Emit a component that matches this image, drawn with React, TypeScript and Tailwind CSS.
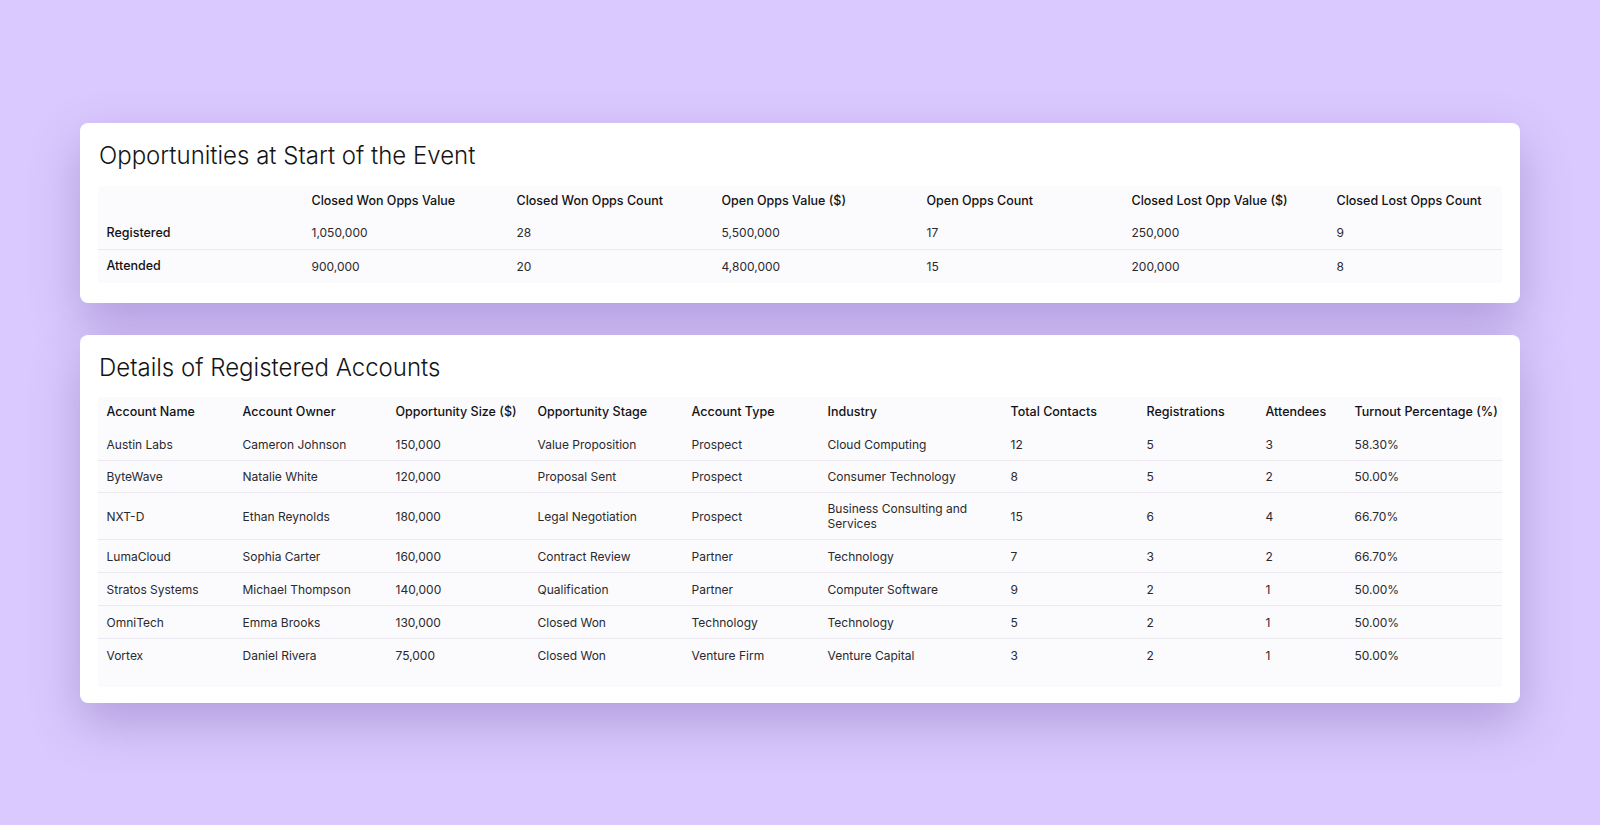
const OPP_COLS = [
  "",
  "Closed Won Opps Value",
  "Closed Won Opps Count",
  "Open Opps Value ($)",
  "Open Opps Count",
  "Closed Lost Opp Value ($)",
  "Closed Lost Opps Count",
];

const OPP_ROWS = [
  ["Registered", "1,050,000", "28", "5,500,000", "17", "250,000", "9"],
  ["Attended", "900,000", "20", "4,800,000", "15", "200,000", "8"],
];

const ACC_COLS = [
  "Account Name",
  "Account Owner",
  "Opportunity Size ($)",
  "Opportunity Stage",
  "Account Type",
  "Industry",
  "Total Contacts",
  "Registrations",
  "Attendees",
  "Turnout Percentage (%)",
];

const ACC_ROWS = [
  ["Austin Labs", "Cameron Johnson", "150,000", "Value Proposition", "Prospect", "Cloud Computing", "12", "5", "3", "58.30%"],
  ["ByteWave", "Natalie White", "120,000", "Proposal Sent", "Prospect", "Consumer Technology", "8", "5", "2", "50.00%"],
  ["NXT-D", "Ethan Reynolds", "180,000", "Legal Negotiation", "Prospect", "Business Consulting and Services", "15", "6", "4", "66.70%"],
  ["LumaCloud", "Sophia Carter", "160,000", "Contract Review", "Partner", "Technology", "7", "3", "2", "66.70%"],
  ["Stratos Systems", "Michael Thompson", "140,000", "Qualification", "Partner", "Computer Software", "9", "2", "1", "50.00%"],
  ["OmniTech", "Emma Brooks", "130,000", "Closed Won", "Technology", "Technology", "5", "2", "1", "50.00%"],
  ["Vortex", "Daniel Rivera", "75,000", "Closed Won", "Venture Firm", "Venture Capital", "3", "2", "1", "50.00%"],
];

// row heights measured off the screenshot
const ACC_HEIGHTS = ["h-[33px]", "h-[32px]", "h-[47px]", "h-[33px]", "h-[33px]", "h-[33px]", "h-[33px]"];

const oppGrid = "grid grid-cols-[205px_205px_205px_205px_205px_205px_1fr]";
const accGrid = "grid grid-cols-[136px_153px_142px_154px_136px_183px_136px_119px_89px_1fr]";

function Card({ title, gap, children }: { title: string; gap: string; children: React.ReactNode }) {
  return (
    <section className="rounded-lg bg-white px-[18px] pt-[18px] shadow-[0_20px_50px_rgba(85,55,145,0.3)]">
      <h2 className="pl-px text-[24px] leading-[30px] font-light text-[#141416]">{title}</h2>
      <div className={gap}>{children}</div>
    </section>
  );
}

export default function App() {
  return (
    <div
      className="flex min-h-[825px] flex-col gap-[32px] bg-[#dac9fe] px-[80px] pt-[123px] text-[12px] text-[#2a2a2e]"
      style={{ fontFamily: "Inter, 'Noto Sans', sans-serif" }}
    >
      <Card title="Opportunities at Start of the Event" gap="mt-[15px] pb-[20px]">
        <div className="bg-[#fbfafd]">
          <div className={`${oppGrid} h-[31px] items-center text-[12.5px] font-medium text-[#121214]`}>
            {OPP_COLS.map((c, i) => (
              <div key={i} className="pl-[8.5px] whitespace-nowrap">{c}</div>
            ))}
          </div>
          {OPP_ROWS.map((row, r) => (
            <div
              key={r}
              className={`${oppGrid} h-[33px] items-center ${r < OPP_ROWS.length - 1 ? "border-b border-[#eceaf0]" : ""}`}
            >
              {row.map((cell, i) => (
                <div key={i} className={`pl-[8.5px] ${i === 0 ? "text-[12.5px] font-medium text-[#121214]" : ""}`}>{cell}</div>
              ))}
            </div>
          ))}
        </div>
      </Card>

      <Card title="Details of Registered Accounts" gap="mt-[14px] pb-[16px]">
        <div className="bg-[#fbfafd] pb-[15px]">
          <div className={`${accGrid} h-[31px] items-center text-[12.5px] font-medium text-[#121214]`}>
            {ACC_COLS.map((c, i) => (
              <div key={i} className="pl-[8.5px] whitespace-nowrap">{c}</div>
            ))}
          </div>
          {ACC_ROWS.map((row, r) => (
            <div
              key={r}
              className={`${accGrid} ${ACC_HEIGHTS[r]} items-center ${r < ACC_ROWS.length - 1 ? "border-b border-[#eceaf0]" : ""}`}
            >
              {row.map((cell, i) => (
                <div key={i} className="pl-[8.5px] pr-4 leading-[15px]">{cell}</div>
              ))}
            </div>
          ))}
        </div>
      </Card>
    </div>
  );
}
